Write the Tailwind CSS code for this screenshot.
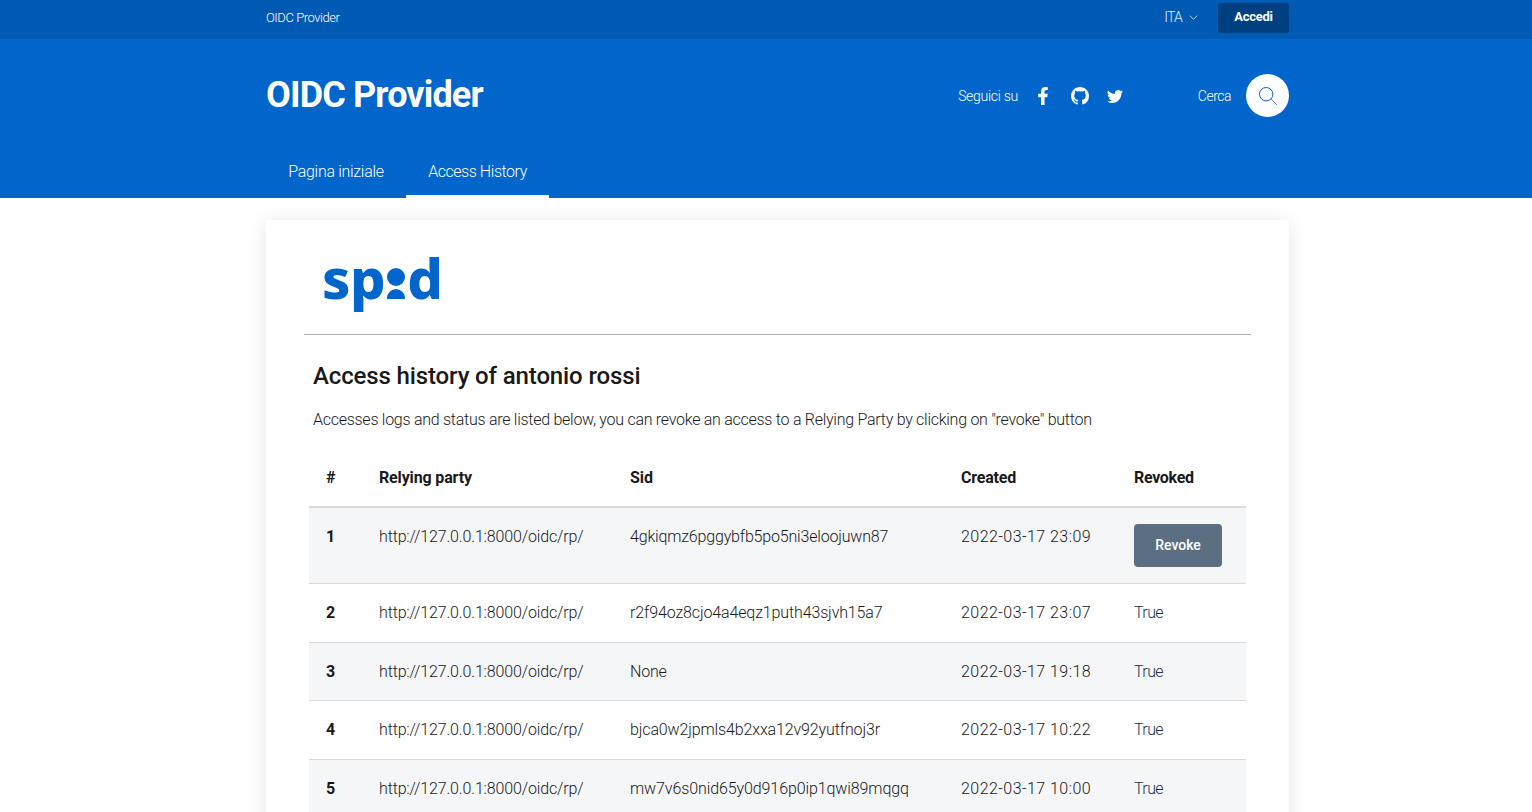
<!DOCTYPE html>
<html lang="en">
<head>
  <meta charset="UTF-8" />
  <title>OIDC Provider</title>
  <script src="https://cdn.jsdelivr.net/npm/@tailwindcss/browser@4"></script>
</head>
<body class="bg-white font-['Roboto',sans-serif] text-[#19191a] overflow-x-hidden">
  <!-- top slim bar -->
  <div class="h-[39px] bg-[#0059b3] text-white">
    <div class="ml-[266px] w-[1023px] h-[35px] flex items-center justify-between">
      <span class="text-[13px] font-light tracking-[-0.45px]">OIDC Provider</span>
      <div class="flex items-center">
        <span class="text-[14px] font-light tracking-[-0.8px] text-white/90">ITA</span>
        <svg class="ml-[7px] mr-[20px] w-[9px] h-[9px]" viewBox="0 0 10 10" fill="none" stroke="#cfe0f3" stroke-width="1"><path d="M1 3l4 4 4-4" /></svg>
        <a class="w-[71px] h-[30px] pb-[2px] rounded-[3px] bg-[#004080] flex items-center justify-center text-[13px] font-bold tracking-[-0.3px]">Accedi</a>
      </div>
    </div>
  </div>

  <!-- main header -->
  <header class="h-[159px] bg-[#0066cc] text-white">
    <div class="ml-[266px] w-[1023px] h-[113px] flex items-center justify-between">
      <h1 class="text-[36px] font-bold tracking-[-0.85px] mt-[-2px]">OIDC Provider</h1>
      <div class="flex items-center">
        <span class="mt-[2px] text-[14px] font-light tracking-[-0.3px]">Seguici su</span>
        <svg class="ml-[18px] w-[14px] h-[18px]" viewBox="0 0 320 512" fill="white"><path d="M279.14 288l14.22-92.66h-88.91v-60.13c0-25.35 12.42-50.06 52.24-50.06h40.42V6.26S260.43 0 225.36 0c-73.22 0-121.08 44.38-121.08 124.72v70.62H22.89V288h81.39v224h100.17V288z" /></svg>
        <svg class="ml-[21px] w-[18px] h-[18px]" viewBox="0 0 16 16" fill="white"><path d="M8 0C3.58 0 0 3.58 0 8c0 3.54 2.29 6.53 5.47 7.59.4.07.55-.17.55-.38 0-.19-.01-.82-.01-1.49-2.01.37-2.53-.49-2.69-.94-.09-.23-.48-.94-.82-1.13-.28-.15-.68-.52-.01-.53.63-.01 1.08.58 1.23.82.72 1.21 1.87.87 2.33.66.07-.52.28-.87.51-1.07-1.78-.2-3.64-.89-3.64-3.95 0-.87.31-1.59.82-2.15-.08-.2-.36-1.02.08-2.12 0 0 .67-.21 2.2.82.64-.18 1.32-.27 2-.27.68 0 1.36.09 2 .27 1.53-1.04 2.2-.82 2.2-.82.44 1.1.16 1.92.08 2.12.51.56.82 1.27.82 2.15 0 3.07-1.87 3.75-3.65 3.95.29.25.54.73.54 1.48 0 1.07-.01 1.93-.01 2.2 0 .21.15.46.55.38A8.013 8.013 0 0016 8c0-4.42-3.58-8-8-8z" /></svg>
        <svg class="ml-[18px] w-[16px] h-[16px]" viewBox="0 0 16 16" fill="white"><path d="M5.026 15c6.038 0 9.341-5.003 9.341-9.334 0-.14 0-.282-.006-.422A6.685 6.685 0 0 0 16 3.542a6.658 6.658 0 0 1-1.889.518 3.301 3.301 0 0 0 1.447-1.817 6.533 6.533 0 0 1-2.087.793A3.286 3.286 0 0 0 7.875 6.03a9.325 9.325 0 0 1-6.767-3.429 3.289 3.289 0 0 0 1.018 4.382A3.323 3.323 0 0 1 .64 6.575v.045a3.288 3.288 0 0 0 2.632 3.218 3.203 3.203 0 0 1-.865.115 3.23 3.23 0 0 1-.614-.057 3.283 3.283 0 0 0 3.067 2.277A6.588 6.588 0 0 1 .78 13.58a6.32 6.32 0 0 1-.78-.045A9.344 9.344 0 0 0 5.026 15z" /></svg>
        <span class="ml-[75px] mt-[2px] text-[14px] font-light tracking-[-0.5px]">Cerca</span>
        <div class="ml-[15px] w-[43px] h-[43px] rounded-full bg-white flex items-center justify-center">
          <svg class="w-[20px] h-[20px]" viewBox="0 0 20 20" fill="none" stroke="#0066cc" stroke-width="1"><circle cx="8.2" cy="8.2" r="6.7" /><path d="M13 13l6 6" stroke="#5b8fc9" /></svg>
        </div>
      </div>
    </div>
    <nav class="ml-[266px] h-[46px] flex text-[16px] font-light">
      <a class="w-[140px] h-full flex items-center justify-center pb-[6px] tracking-[-0.3px]">Pagina iniziale</a>
      <a class="w-[143px] h-full flex items-center justify-center pb-[3px] border-b-[3px] border-white tracking-[-0.45px]">Access History</a>
    </nav>
  </header>

  <!-- card -->
  <main class="ml-[266px] w-[1023px] mt-[22px] bg-white rounded-[3px] shadow-[0_2px_20px_rgba(0,0,0,0.1)] px-[38px] pt-[28px] pb-[40px]">
    <div class="h-[87px] border-b border-[#b1b1b3]">
      <div class="ml-[18px] flex items-start h-[56px] text-[#0066cc] font-['Noto_Sans',sans-serif] font-extrabold text-[56px] leading-[58px]">
        <span class="tracking-[-0.5px]">sp</span>
        <span class="flex flex-col items-center w-[18px] mx-[2px] pt-[20px]">
          <span class="block w-[18px] h-[18px] rounded-full bg-[#0066cc]"></span>
          <span class="block w-[18px] h-[10px] mt-[3px] rounded-t-full bg-[#0066cc]"></span>
        </span>
        <span>d</span>
      </div>
    </div>

    <h2 class="ml-[9px] mt-[23px] text-[24px] leading-[36px] font-medium tracking-[-0.13px]">Access history of antonio rossi</h2>
    <p class="ml-[9px] mt-[14px] text-[16px] leading-[24px] font-light tracking-[-0.27px]">Accesses logs and status are listed below, you can revoke an access to a Relying Party by clicking on "revoke" button</p>

    <table class="ml-[5px] mt-[21px] w-[937px] table-fixed border-collapse text-[16px] font-light text-left">
      <colgroup>
        <col class="w-[70px]" /><col class="w-[251px]" /><col class="w-[331px]" /><col class="w-[173px]" /><col class="w-[112px]" />
      </colgroup>
      <thead>
        <tr class="h-[54px] border-b-2 border-[#d9dadb]">
          <th class="pl-[17px] pb-[4px] font-bold">#</th><th class="pb-[4px] font-bold tracking-[-0.15px]">Relying party</th><th class="pb-[4px] font-bold">Sid</th><th class="pb-[4px] font-bold tracking-[-0.2px]">Created</th><th class="pb-[4px] font-bold tracking-[-0.3px]">Revoked</th>
        </tr>
      </thead>
      <tbody>
        <tr class="h-[76px] bg-[#f5f6f8] border-b border-[#d9dadb] align-top">
          <th class="pl-[17px] pt-[17px] font-bold">1</th><td class="pt-[17px] tracking-[-0.15px]">http://127.0.0.1:8000/oidc/rp/</td><td class="pt-[17px] tracking-[-0.18px]">4gkiqmz6pggybfb5po5ni3eloojuwn87</td><td class="pt-[17px] tracking-[0.45px]">2022-03-17 23:09</td>
          <td class="pt-[16px]"><button class="w-[88px] h-[43px] rounded-[4px] bg-[#5c6f82] text-white text-[14px] font-medium">Revoke</button></td>
        </tr>
        <tr class="h-[59px] border-b border-[#d9dadb]">
          <th class="pl-[17px] font-bold">2</th><td class="tracking-[-0.15px]">http://127.0.0.1:8000/oidc/rp/</td><td class="tracking-[-0.13px]">r2f94oz8cjo4a4eqz1puth43sjvh15a7</td><td class="tracking-[0.45px]">2022-03-17 23:07</td><td class="text-[#17324d] tracking-[-0.6px]">True</td>
        </tr>
        <tr class="h-[58px] bg-[#f5f6f8] border-b border-[#d9dadb]">
          <th class="pl-[17px] pt-[2px] font-bold">3</th><td class="pt-[2px] tracking-[-0.15px]">http://127.0.0.1:8000/oidc/rp/</td><td class="pt-[2px] tracking-[-0.2px]">None</td><td class="pt-[2px] tracking-[0.45px]">2022-03-17 19:18</td><td class="text-[#17324d] pt-[2px] tracking-[-0.6px]">True</td>
        </tr>
        <tr class="h-[59px] border-b border-[#d9dadb]">
          <th class="pl-[17px] font-bold">4</th><td class="tracking-[-0.15px]">http://127.0.0.1:8000/oidc/rp/</td><td class="tracking-[-0.13px]">bjca0w2jpmls4b2xxa12v92yutfnoj3r</td><td class="tracking-[0.45px]">2022-03-17 10:22</td><td class="text-[#17324d] tracking-[-0.6px]">True</td>
        </tr>
        <tr class="h-[59px] bg-[#f5f6f8] border-b border-[#d9dadb]">
          <th class="pl-[17px] font-bold">5</th><td class="tracking-[-0.15px]">http://127.0.0.1:8000/oidc/rp/</td><td class="tracking-[-0.1px]">mw7v6s0nid65y0d916p0ip1qwi89mqgq</td><td class="tracking-[0.45px]">2022-03-17 10:00</td><td class="text-[#17324d] tracking-[-0.6px]">True</td>
        </tr>
      </tbody>
    </table>
  </main>
</body>
</html>
